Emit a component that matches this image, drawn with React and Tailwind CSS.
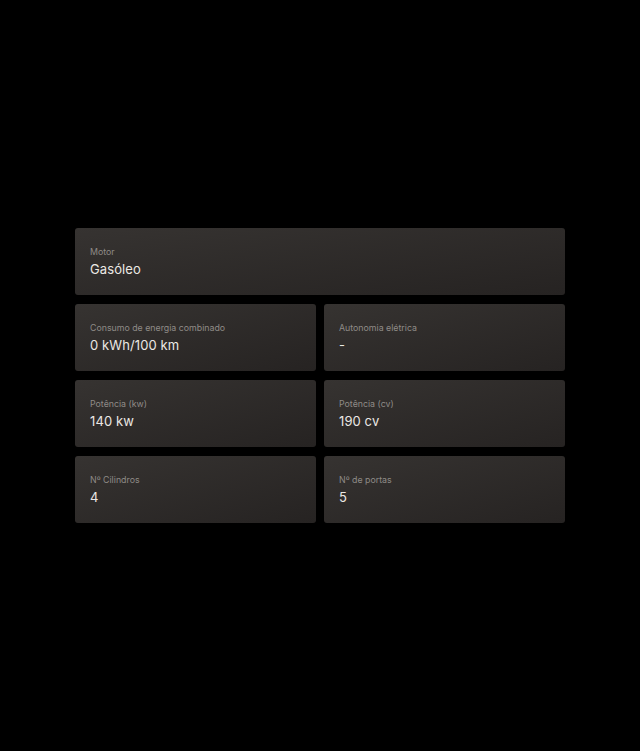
const specs = [
  [{ label: 'Motor', value: 'Gasóleo' }],
  [
    { label: 'Consumo de energia combinado', value: '0 kWh/100 km' },
    { label: 'Autonomia elétrica', value: '-' },
  ],
  [
    { label: 'Potência (kw)', value: '140 kw' },
    { label: 'Potência (cv)', value: '190 cv' },
  ],
  [
    { label: 'Nº Cilindros', value: '4' },
    { label: 'Nº de portas', value: '5' },
  ],
]

function SpecCard({ label, value }) {
  return (
    <div className="h-[67px] rounded-[3px] bg-gradient-to-br from-[#363331] to-[#262322] px-[15px] pt-[18px]">
      <div className="text-[8.8px] leading-[12px] text-[#8f8b87]">{label}</div>
      <div className="mt-[2px] text-[13px] leading-[18px] tracking-[0.1px] text-[#ebe8e4]">{value}</div>
    </div>
  )
}

export default function App() {
  return (
    <div
      className="min-h-[751px] bg-black flex items-center justify-center"
      style={{ fontFamily: 'Inter, "Open Sans", sans-serif' }}
    >
      <div className="w-[490px] flex flex-col gap-[9px]">
        {specs.map((row, i) => (
          <div key={i} className={row.length === 1 ? 'grid grid-cols-1' : 'grid grid-cols-2 gap-[8px]'}>
            {row.map((s) => (
              <SpecCard key={s.label} {...s} />
            ))}
          </div>
        ))}
      </div>
    </div>
  )
}
